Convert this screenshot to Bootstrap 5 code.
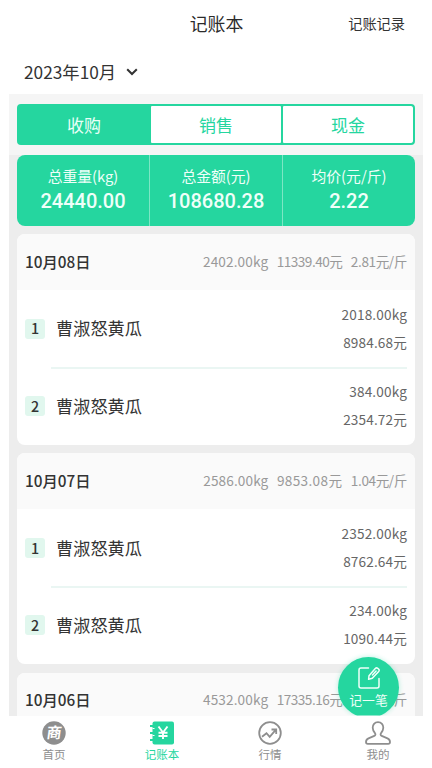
<!DOCTYPE html>
<html lang="zh-CN">
<head>
<meta charset="utf-8">
<meta name="viewport" content="width=device-width, initial-scale=1">
<title>记账本</title>
<link href="https://cdn.jsdelivr.net/npm/bootstrap@5.3.0/dist/css/bootstrap.min.css" rel="stylesheet">
<style>
:root{--brand:#25d69f;--ink:#333}
body{font-family:"Noto Sans CJK SC",sans-serif;color:var(--ink);background:#fff;height:768px;overflow:hidden;line-height:1}
.app{height:768px}
.top-bar,.month,.tabbar{flex-shrink:0}
.top-bar{height:47px;display:grid;grid-template-columns:1fr auto 1fr;padding:0 27px 0 28px}
.top-title{font-size:17.9px;color:#2b2b2b}
.top-link{font-size:14.2px;padding-bottom:1px}
.month{height:47px;padding:3px 0 0 24px;font-size:17.3px}
.month svg{margin-left:10px}
.sheet{margin:0 9px;background:#ededed;flex:1 1 0;min-height:0;overflow:hidden}
.tabs-wrap{background:#f5f5f5;padding:10px 8px;height:60.500px}
.seg{height:40.500px;border:2px solid var(--brand);border-radius:4px;background:var(--brand);gap:2px;overflow:hidden}
.seg button{flex:1 1 0;border:0;background:#fff;color:var(--brand);font-size:17px;padding:0;border-radius:1px}
.seg button.on{background:var(--brand);color:#e9fff7}
.totals{margin:0 8px;height:71.500px;border-radius:8px;background:var(--brand);color:#effff9;overflow:hidden}
.totals>div{flex:1 1 0;padding-top:12px}
.totals>div+div{border-left:1px solid #7de6c4}
.t-label{font-size:14.8px;line-height:18px}
.t-num{font-family:Roboto,sans-serif;font-weight:500;font-size:20px;line-height:24px;margin-top:4.500px}
.day{margin:8.400px 8px 0;border-radius:8px;background:#fff;overflow:hidden;height:210.700px}
.day-head{height:56px;background:#fafafa;padding:0 8px 1px}
.day-date{font-size:15.3px;font-weight:500}
.day-sum{font-size:13.6px;color:#999;gap:8.500px}
.day-sum span:nth-child(1){letter-spacing:.12px}
.day-sum span:nth-child(2){letter-spacing:.35px}
.day-sum span.tight:nth-child(2){letter-spacing:-.5px}
.day-sum span:nth-child(3){letter-spacing:-.4px}
.entry{height:77.400px;padding:0 8px 1px}
.rule{height:1.600px;margin:-.8px 8px -.8px 34px;background:#eaf6f3}
.idx{width:20px;height:20px;border-radius:3px;background:#e1f7ee;font-size:14.3px;font-weight:500}
.goods{font-size:17.2px;margin-left:11px;padding-bottom:1px}
.amt{font-size:13.6px;line-height:27.6px;color:#666;letter-spacing:.15px}
.tabbar{height:52.500px;background:#fff}
.tabbar a{flex:1 1 0;text-decoration:none;color:#8e8e8e;font-size:11.5px;padding-top:5px}
.tabbar a.on{color:var(--brand)}
.tabbar span{margin-top:2.500px;line-height:14px}
.fab{position:absolute;left:338px;top:656.500px;width:61px;height:59px;border:0;padding:0;background:none;clip-path:inset(-8px -8px 0 -8px)}
.fab-disc{width:61px;height:61px;border-radius:50%;background:var(--brand);color:#effff9;font-size:12.8px;box-shadow:0 0 5px #25d69f55;padding-top:9px}
.fab-disc span{margin-top:2px;line-height:16px}
</style>
<script src="https://cdn.jsdelivr.net/npm/bootstrap@5.3.0/dist/js/bootstrap.bundle.min.js"></script>
</head>
<body>
<div class="app d-flex flex-column position-relative">
  <header class="top-bar align-items-center">
    <span></span><span class="top-title">记账本</span><span class="top-link text-end">记账记录</span>
  </header>
  <div class="month d-flex align-items-center">
    <span>2023年10月</span>
    <svg width="12" height="8" viewBox="0 0 12 8" fill="none" stroke="#333" stroke-width="2"><path d="M1.2 1.2 6 6 10.8 1.2"/></svg>
  </div>
  <main class="sheet">
    <div class="tabs-wrap">
      <div class="seg d-flex"><button class="on">收购</button><button>销售</button><button>现金</button></div>
    </div>
    <section class="totals d-flex text-center">
      <div><div class="t-label">总重量(kg)</div><div class="t-num">24440.00</div></div>
      <div><div class="t-label">总金额(元)</div><div class="t-num">108680.28</div></div>
      <div><div class="t-label">均价(元/斤)</div><div class="t-num">2.22</div></div>
    </section>
    <section class="day">
      <div class="day-head d-flex align-items-center justify-content-between"><span class="day-date">10月08日</span><div class="day-sum d-flex"><span>2402.00kg</span><span class="tight">11339.40元</span><span>2.81元/斤</span></div></div>
      <div class="entry d-flex align-items-center"><span class="idx d-flex align-items-center justify-content-center">1</span><span class="goods">曹淑怒黄瓜</span><div class="amt ms-auto text-end">2018.00kg<br>8984.68元</div></div>
      <div class="rule"></div>
      <div class="entry d-flex align-items-center"><span class="idx d-flex align-items-center justify-content-center">2</span><span class="goods">曹淑怒黄瓜</span><div class="amt ms-auto text-end">384.00kg<br>2354.72元</div></div>
    </section>
    <section class="day">
      <div class="day-head d-flex align-items-center justify-content-between"><span class="day-date">10月07日</span><div class="day-sum d-flex"><span>2586.00kg</span><span>9853.08元</span><span>1.04元/斤</span></div></div>
      <div class="entry d-flex align-items-center"><span class="idx d-flex align-items-center justify-content-center">1</span><span class="goods">曹淑怒黄瓜</span><div class="amt ms-auto text-end">2352.00kg<br>8762.64元</div></div>
      <div class="rule"></div>
      <div class="entry d-flex align-items-center"><span class="idx d-flex align-items-center justify-content-center">2</span><span class="goods">曹淑怒黄瓜</span><div class="amt ms-auto text-end">234.00kg<br>1090.44元</div></div>
    </section>
    <section class="day">
      <div class="day-head d-flex align-items-center justify-content-between"><span class="day-date">10月06日</span><div class="day-sum d-flex"><span>4532.00kg</span><span class="tight">17335.16元</span><span>1.91元/斤</span></div></div>
    </section>
  </main>
  <button class="fab">
    <div class="fab-disc d-flex flex-column align-items-center">
      <svg width="24" height="24" viewBox="0 0 24 24" fill="none" stroke="currentColor" stroke-width="1.5" stroke-linecap="round" stroke-linejoin="round"><path d="M11.5 2H4Q2 2 2 4v16q0 2 2 2h16q2 0 2-2v-7.500"/><path d="m12 9.800 6.300-7.300q1.100-1.200 2.400-.2l.9.800q1.200 1.100.1 2.300l-6.400 6.900-3.700 1z"/><path d="m15.500 9 3.600-4"/></svg>
      <span>记一笔</span>
    </div>
  </button>
  <nav class="tabbar d-flex">
    <a href="#" class="d-flex flex-column align-items-center">
      <svg width="24" height="24" viewBox="0 0 24 24"><circle cx="12" cy="12" r="11.700" fill="#8e8e8e"/><text x="12" y="17.400" font-size="15" font-weight="700" text-anchor="middle" fill="#fff" transform="translate(2 0) skewX(-8)">商</text></svg>
      <span>首页</span></a>
    <a href="#" class="on d-flex flex-column align-items-center">
      <svg width="24" height="24" viewBox="0 0 24 24"><rect x="2.500" y=".5" width="21.500" height="23" rx="2" fill="#25d69f"/><path d="M0 5h4M0 12h4M0 19h4" stroke="#25d69f" stroke-width="2"/><path d="M2.500 7.500h2M2.500 14.500h2" stroke="#fff" stroke-width="1.200"/><path d="m8.500 5.500 4.500 6 4.500-6M13 11.500V18M8.500 11.800h9M8.500 15h9" fill="none" stroke="#fff" stroke-width="1.900"/></svg>
      <span>记账本</span></a>
    <a href="#" class="d-flex flex-column align-items-center">
      <svg width="24" height="24" viewBox="0 0 24 24" fill="none" stroke="#8e8e8e" stroke-width="1.800"><circle cx="12" cy="12" r="10.800"/><path d="m4 15.800 4.500-3.600 3.200 3.600 6-7M13.500 8.500h4.700v4.600"/></svg>
      <span>行情</span></a>
    <a href="#" class="d-flex flex-column align-items-center">
      <svg width="26" height="24" viewBox="0 0 26 24" fill="none" stroke="#8e8e8e" stroke-width="1.800" stroke-linejoin="round"><path d="M13 1.200c-3.400 0-5.400 2.400-5.300 5.600.1 2.400 1 4 2.200 5.200.9 1 .7 2.400-.6 2.900L3.500 17.300C1.600 18.100 1 19.300 1 21q0 1.800 1.800 1.800h20.400Q25 22.800 25 21c0-1.700-.6-2.900-2.500-3.700l-5.800-2.400c-1.300-.5-1.500-1.900-.6-2.900 1.200-1.200 2.100-2.800 2.200-5.200.1-3.200-1.900-5.600-5.300-5.600z"/></svg>
      <span>我的</span></a>
  </nav>
</div>
</body>
</html>
